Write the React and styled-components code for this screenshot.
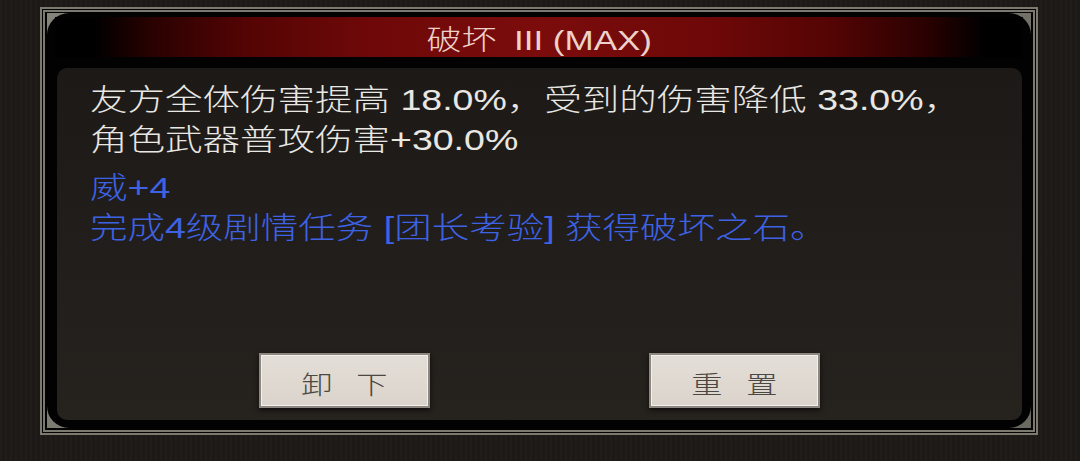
import React from "react";
import styled, { createGlobalStyle } from "styled-components";

const Global = createGlobalStyle`
  html, body { margin: 0; padding: 0; background: #1d1a17; }
  body { font-family: "Liberation Sans", "Noto Sans CJK SC", sans-serif; }
`;

const Page = styled.div`
  width: 1080px;
  height: 461px;
  box-sizing: border-box;
  padding: 7px 0 0 40px;
  overflow: hidden;
  background-color: #1d1a17;
  background-image: repeating-linear-gradient(
    90deg,
    rgba(255, 255, 255, 0.012) 0 2px,
    rgba(0, 0, 0, 0.03) 2px 5px
  );
`;

const Frame = styled.div`
  width: 998px;
  height: 428px;
  box-sizing: border-box;
  border: 5px double #7c796e;
  background: #030303;
  padding: 1px 2px 2px 2px;
  display: flex;
`;

const CornerBacking = styled.div`
  flex: 1;
  display: flex;
  background: linear-gradient(135deg, #85847a, #6b6a60);
`;

const Dialog = styled.div`
  flex: 1;
  display: flex;
  flex-direction: column;
  background: #020202;
  border-radius: 22px;
`;

const TitleBar = styled.div`
  height: 40px;
  margin: 4px 8px 0;
  box-sizing: border-box;
  padding-top: 9px;
  display: flex;
  justify-content: center;
  align-items: flex-start;
  background: linear-gradient(
    90deg,
    #000 0%,
    #000 4%,
    #2a0101 10%,
    #550404 20%,
    #6e0808 32%,
    #7b0c0c 50%,
    #6e0808 68%,
    #550404 80%,
    #2a0101 90%,
    #000 96%,
    #000 100%
  );
`;

const Stretch = styled.span`
  display: inline-block;
  white-space: nowrap;
  transform: scaleX(1.25);
  transform-origin: ${(p) => p.$origin || "left"} center;
`;

const Title = styled(Stretch)`
  font-size: 28px;
  font-weight: 300;
  line-height: 30px;
  color: #ecd2ca;
`;

const Roman = styled.span`
  margin-left: 14px;
`;

const Content = styled.div`
  flex: 1;
  margin: 11px 9px 8px 10px;
  border-radius: 10px;
  background: linear-gradient(180deg, #1c1916 0%, #221e1b 55%, #26221e 100%);
  display: flex;
  flex-direction: column;
  padding: 12px 0 12px 33px;
  box-sizing: border-box;
`;

const TextBlock = styled.div`
  transform: scaleX(1.25);
  transform-origin: left top;
  font-size: 30px;
  font-weight: 300;
  line-height: 40px;
`;

const Para = styled.div`
  color: ${(p) => p.$color};
  & + & {
    margin-top: 8px;
  }
`;

const Line = styled.div`
  white-space: nowrap;
`;

const ButtonRow = styled.div`
  margin-top: auto;
  margin-left: -33px;
  display: flex;
  justify-content: center;
  gap: 219px;
`;

const Button = styled.button`
  width: 171px;
  height: 55px;
  box-sizing: border-box;
  border: 2px solid #8c8781;
  background: linear-gradient(180deg, #e3ded7 0%, #dbd4cc 100%);
  box-shadow: inset 0 0 0 1px #f4efe9, 0 2px 5px rgba(0, 0, 0, 0.7);
  padding: 8px 0 0;
  display: flex;
  align-items: center;
  justify-content: center;
  font-family: "Liberation Sans", "Noto Sans CJK SC", sans-serif;
  cursor: pointer;
`;

const ButtonLabel = styled(Stretch)`
  font-size: 25px;
  font-weight: 300;
  line-height: 28px;
  color: #4b4743;
  letter-spacing: 19px;
  padding-left: 19px;
`;

export default function App() {
  return (
    <>
      <Global />
      <Page>
        <Frame>
          <CornerBacking>
            <Dialog>
              <TitleBar>
                <Title $origin="center">
                  破坏<Roman>III (MAX)</Roman>
                </Title>
              </TitleBar>
              <Content>
                <TextBlock>
                  <Para $color="#e9e7e3">
                    <Line>友方全体伤害提高 18.0%，受到的伤害降低 33.0%，</Line>
                    <Line>角色武器普攻伤害+30.0%</Line>
                  </Para>
                  <Para $color="#3d62e4">
                    <Line>威+4</Line>
                    <Line>完成4级剧情任务 [团长考验] 获得破坏之石。</Line>
                  </Para>
                </TextBlock>
                <ButtonRow>
                  <Button>
                    <ButtonLabel $origin="center">卸下</ButtonLabel>
                  </Button>
                  <Button>
                    <ButtonLabel $origin="center">重置</ButtonLabel>
                  </Button>
                </ButtonRow>
              </Content>
            </Dialog>
          </CornerBacking>
        </Frame>
      </Page>
    </>
  );
}
